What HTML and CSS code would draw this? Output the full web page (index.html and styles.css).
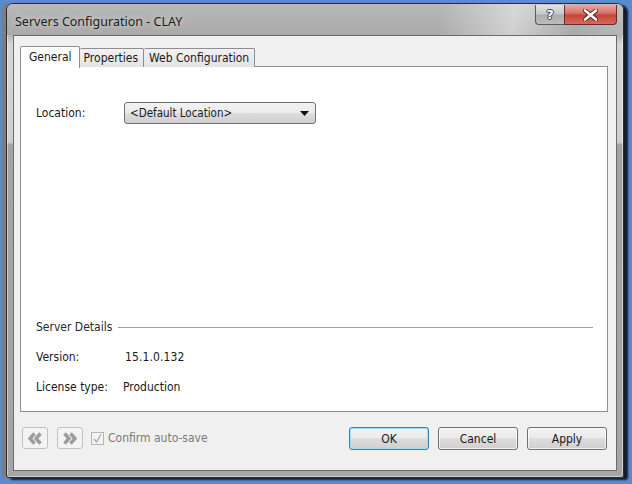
FILE: index.html
```html
<!DOCTYPE html>
<html>
<head>
<meta charset="utf-8">
<link rel="stylesheet" href="styles.css">
</head>
<body>
<div class="screen">
  <div class="window">
    <div class="titlebar">
      <div class="title">Servers Configuration - CLAY</div>
      <div class="caption-buttons">
        <div class="cap-btn help">?</div>
        <div class="cap-btn close">
          <svg width="15" height="12" viewBox="0 0 15 12"><path d="M2 1.5 L13 10.5 M13 1.5 L2 10.5" stroke="#4a1a16" stroke-width="4.2" stroke-linecap="round"/><path d="M2 1.5 L13 10.5 M13 1.5 L2 10.5" stroke="#fff" stroke-width="2.6" stroke-linecap="round"/></svg>
        </div>
      </div>
    </div>
    <div class="client">
      <div class="tabs">
        <div class="tab active">General</div>
        <div class="tab">Properties</div>
        <div class="tab">Web Configuration</div>
      </div>
      <div class="panel">
        <div class="row loc-row">
          <div class="label">Location:</div>
          <div class="combo">
            <span>&lt;Default Location&gt;</span>
            <svg class="arrow" width="9" height="5" viewBox="0 0 9 5"><path d="M0 0 H9 L4.5 5 Z" fill="#111"/></svg>
          </div>
        </div>
        <div class="spacer"></div>
        <div class="details">
          <div class="group-head"><span>Server Details</span><div class="rule"></div></div>
          <div class="row info"><div class="label">Version:</div><div class="value version">15.1.0.132</div></div>
          <div class="row info"><div class="label">License type:</div><div class="value">Production</div></div>
        </div>
      </div>
      <div class="bottombar">
        <div class="nav-btn">
          <svg width="16" height="13" viewBox="0 0 16 13"><path d="M7.5 1.5 L3 6.5 L7.5 11.5 M13.5 1.5 L9 6.5 L13.5 11.5" fill="none" stroke="#9c9c9c" stroke-width="3.4"/></svg>
        </div>
        <div class="nav-btn">
          <svg width="16" height="13" viewBox="0 0 16 13"><path d="M2.5 1.5 L7 6.5 L2.5 11.5 M8.5 1.5 L13 6.5 L8.5 11.5" fill="none" stroke="#9c9c9c" stroke-width="3.4"/></svg>
        </div>
        <div class="check">
          <div class="box"><svg width="11" height="11" viewBox="0 0 11 11"><path d="M2 6 L4.5 9 L9 1.5" fill="none" stroke="#a8a8a8" stroke-width="1.3"/></svg></div>
          <span>Confirm auto-save</span>
        </div>
        <div class="grow"></div>
        <div class="btn default">OK</div>
        <div class="btn">Cancel</div>
        <div class="btn">Apply</div>
      </div>
    </div>
  </div>
</div>
</body>
</html>
```

FILE: styles.css
```css
html, body {
  margin: 0;
  padding: 0;
}
body {
  width: 632px;
  height: 484px;
  overflow: hidden;
  background: #5b8bcf;
  font-family: "DejaVu Sans Condensed", "DejaVu Sans", sans-serif;
  font-size: 12px;
  color: #1a1a1a;
}
.screen {
  width: 632px;
  height: 484px;
  padding: 3px 0 0 6px;
  box-sizing: border-box;
}
.window {
  width: 618px;
  height: 475px;
  box-sizing: border-box;
  border: 1px solid #2c2c2c;
  border-radius: 7px 7px 3px 3px;
  background: linear-gradient(to bottom, #c4c4c4 0, #b7b7b7 32px, #d6d6d6 40px, #cfcfcf 138px, #a3a3a3 141px, #a6a6a6 100%);
  box-shadow: -4px 0 1px #7d7d7d, 4px 2px 2px rgba(0,0,0,0.8), inset 0 0 0 1px rgba(255,255,255,0.45);
  display: flex;
  flex-direction: column;
}
.titlebar {
  height: 31px;
  flex: none;
  display: flex;
  justify-content: space-between;
  align-items: flex-start;
  padding: 0 6px 0 8px;
  border-radius: 6px 6px 0 0;
  background: linear-gradient(100deg, rgba(255,255,255,0) 0%, rgba(255,255,255,0) 70%, rgba(255,255,255,0.45) 82%, rgba(255,255,255,0) 92%, rgba(255,255,255,0.15) 100%), linear-gradient(to bottom, #b9b9b9, #a9a9a9);
}
.title {
  font-family: "Noto Sans", sans-serif;
  font-size: 12.5px;
  color: #1c1c1c;
  padding-top: 9px;
  text-shadow: 0 0 6px rgba(255,255,255,0.7);
}
.caption-buttons {
  display: flex;
  padding-top: 1px;
}
.cap-btn {
  height: 20px;
  box-sizing: border-box;
  border: 1px solid #5a5a5a;
  border-top: none;
  display: flex;
  align-items: center;
  justify-content: center;
}
.help {
  width: 29px;
  border-radius: 0 0 0 4px;
  background: linear-gradient(to bottom, #e3e3e3 0, #c9c9c9 45%, #adadad 55%, #bdbdbd 100%);
  font-family: "DejaVu Sans", sans-serif;
  font-weight: bold;
  font-size: 13px;
  color: #fff;
  text-shadow: 1px 0 0 #444, -1px 0 0 #444, 0 1px 0 #444, 0 -1px 0 #444;
  border-right: none;
}
.close {
  width: 53px;
  border-radius: 0 0 4px 0;
  border-color: #6a2a25;
  background: linear-gradient(to bottom, #e9a89f 0, #d7776c 40%, #c5453a 55%, #d36a5c 100%);
}
.client {
  flex: 1;
  margin: 0 6px 6px 6px;
  border: 1px solid #6b6b6b;
  background: #f0f0f0;
  display: flex;
  flex-direction: column;
  padding: 11px 8px 0 6px;
}
.tabs {
  display: flex;
  align-items: flex-end;
  height: 20px;
  position: relative;
  z-index: 1;
  margin-bottom: -1px;
}
.tab {
  height: 19px;
  box-sizing: border-box;
  padding: 0 5px;
  border: 1px solid #8c8e94;
  border-bottom: none;
  border-left: none;
  background: linear-gradient(to bottom, #f2f2f2, #e3e3e3);
  display: flex;
  align-items: center;
  border-radius: 2px 2px 0 0;
}
.tab:nth-child(2) {
  padding-left: 4px;
}
.tab.active {
  height: 22px;
  border-left: 1px solid #8c8e94;
  background: #fff;
  padding: 0 7px 2px 8px;
  margin-bottom: -1px;
}
.panel {
  height: 346px;
  box-sizing: border-box;
  border: 1px solid #8c8e94;
  background: #fff;
  display: flex;
  flex-direction: column;
  padding: 35px 14px 16px 15px;
}
.row {
  display: flex;
  align-items: center;
}
.label {
  width: 87px;
  flex: none;
}
.loc-row {
  height: 22px;
}
.combo {
  width: 192px;
  height: 22px;
  margin-left: 1px;
  box-sizing: border-box;
  border: 1px solid #707070;
  border-radius: 3px;
  background: linear-gradient(to bottom, #f2f2f2 0, #ebebeb 50%, #dddddd 50%, #cfcfcf 100%);
  display: flex;
  align-items: center;
  justify-content: space-between;
  padding: 0 6px 0 5px;
  font-size: 11.5px;
}
.arrow {
  margin-top: 1px;
}
.spacer {
  flex: 1;
}
.group-head {
  display: flex;
  align-items: center;
  height: 16px;
  color: #2a2a2a;
  margin-bottom: 1px;
}
.group-head span {
  margin-right: 6px;
}
.rule {
  flex: 1;
  height: 1px;
  background: #a0a0a0;
}
.info {
  height: 16px;
  margin-top: 14px;
}
.value.version {
  padding-left: 2px;
  letter-spacing: 0.1px;
}
.bottombar {
  flex: 1;
  display: flex;
  align-items: flex-start;
  padding-top: 15px;
  padding-right: 1px;
  padding-left: 2px;
}
.nav-btn {
  width: 26px;
  height: 22px;
  box-sizing: border-box;
  border: 1px solid #c2c2c2;
  border-radius: 3px;
  background: #f3f3f3;
  display: flex;
  align-items: center;
  justify-content: center;
  margin-right: 9px;
}
.check {
  display: flex;
  align-items: center;
  height: 22px;
  color: #7a7a7a;
  font-size: 12px;
  margin-left: -1px;
}
.box {
  width: 13px;
  height: 13px;
  box-sizing: border-box;
  border: 1px solid #b5b5b5;
  background: #f4f4f4;
  margin-right: 4px;
  display: flex;
  align-items: center;
  justify-content: center;
}
.grow {
  flex: 1;
}
.btn {
  width: 80px;
  height: 23px;
  box-sizing: border-box;
  border: 1px solid #707070;
  border-radius: 3px;
  background: linear-gradient(to bottom, #f2f2f2 0, #ebebeb 50%, #dddddd 50%, #cfcfcf 100%);
  box-shadow: inset 0 0 0 1px rgba(255,255,255,0.7);
  display: flex;
  align-items: center;
  justify-content: center;
  margin-left: 9px;
}
.btn.default {
  border-color: #3c7fb1;
  box-shadow: inset 0 0 0 1px #9ce0fa;
}
```
